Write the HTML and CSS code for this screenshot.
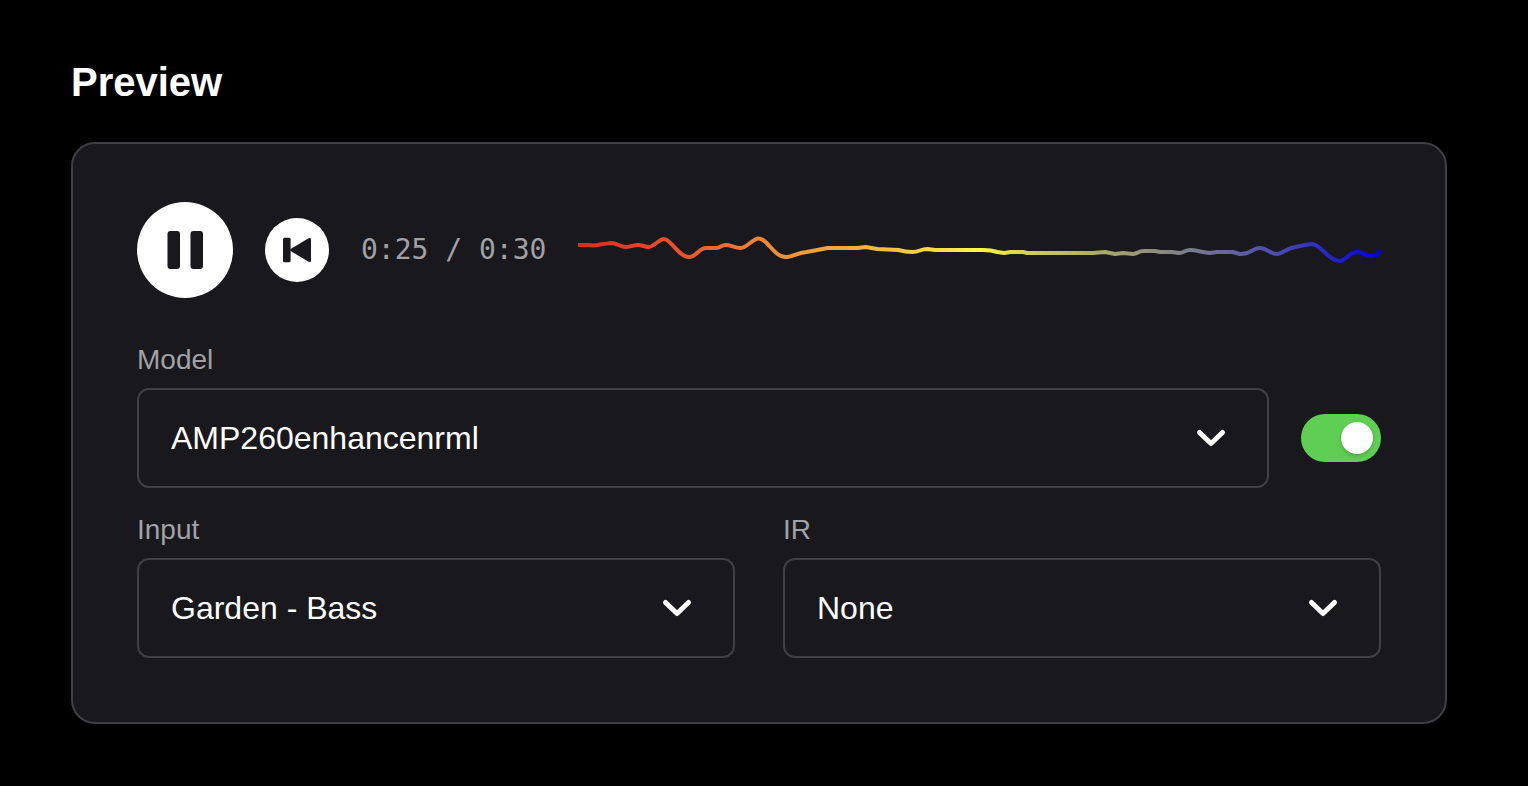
FILE: index.html
```html
<!DOCTYPE html>
<html lang="en">
<head>
  <meta charset="UTF-8" />
  <meta name="viewport" content="width=device-width, initial-scale=1.0">
  <title>Preview</title>
  <link rel="stylesheet" href="styles.css">
</head>
<body>

  <h1>Preview</h1>

  <main class="player">
    <div class="controls">
      <button class="round-button play" type="button" aria-label="Pause">
        <svg viewBox="0 0 96 96" aria-hidden="true">
          <rect x="30.5" y="29" width="12.5" height="38" rx="3" />
          <rect x="53.5" y="29" width="12.5" height="38" rx="3" />
        </svg>
      </button>
      <button class="round-button restart" type="button" aria-label="Back to start">
        <svg viewBox="0 0 64 64" aria-hidden="true">
          <rect x="18" y="19.7" width="7.6" height="24.6" rx="1.5" />
          <path d="M25.600 31 43.600 20.300Q46 19 46 21.800V42.200Q46 45 43.600 43.700L25.600 33Q24.600 32 25.600 31Z" />
        </svg>
      </button>
      <span class="time">0:25 / 0:30</span>
      <svg class="waveform" viewBox="0 0 804 96" preserveAspectRatio="none" aria-hidden="true">
        <defs>
          <linearGradient id="wave" gradientUnits="userSpaceOnUse" x1="0" y1="0" x2="804" y2="0">
            <stop offset="0" stop-color="#e02a20" />
            <stop offset="0.12" stop-color="#e8502a" />
            <stop offset="0.25" stop-color="#ee9038" />
            <stop offset="0.4" stop-color="#f2c444" />
            <stop offset="0.5" stop-color="#fcf844" />
            <stop offset="0.56" stop-color="#d4d04c" />
            <stop offset="0.75" stop-color="#80808a" />
            <stop offset="0.88" stop-color="#4646b0" />
            <stop offset="1" stop-color="#0000e6" />
          </linearGradient>
        </defs>
        <path d="M0 43H10Q16 44 22 42.500Q29 41.500 33 41C39 41 42 45 48 45S55 43 60 43S66 45 71 45C75 45 82 37 86 37C93 37 101 55 111 55C119 55 121 46 128 46H138C143 46 143 43 148 43S157 46 163 46C169 46 175 36.500 181 36.500C190 36.500 196 55 208 55C214 55 219 51 229 50Q240 48 250 46H280L288 45L300 47L321 48Q328 50 335 50C342 50 343 47 350 47L358 48H406Q414 48 420 50L427 51L433 50H446L450 51H516L528 50L538 52L546 51L556 52C561 52 561 49 567 49H578L583 50H595L602 51C607 51 608 48 613 48S625 50 633 51L640 50H656L663 52C673 53 676 46 683 46S694 52 700 52C706 52 710 46 719 45Q727 43 735 42C744 42 752 59 763 59C769 59 773 50 780 50S788 54 795 54Q803 54 803 48" />
      </svg>
    </div>

    <div class="model-row">
      <div class="field">
        <label for="model">Model</label>
        <div class="select-wrap">
          <select id="model">
            <option>AMP260enhancenrml</option>
          </select>
          <svg class="chevron" viewBox="0 0 32 32" aria-hidden="true"><path d="M4.500 10.500 16 21.500 27.500 10.500" /></svg>
        </div>
      </div>
      <input class="toggle" type="checkbox" role="switch" aria-label="Enable model" checked>
    </div>

    <div class="options-row">
      <div class="field">
        <label for="input">Input</label>
        <div class="select-wrap">
          <select id="input">
            <option>Garden - Bass</option>
          </select>
          <svg class="chevron" viewBox="0 0 32 32" aria-hidden="true"><path d="M4.500 10.500 16 21.500 27.500 10.500" /></svg>
        </div>
      </div>
      <div class="field">
        <label for="ir">IR</label>
        <div class="select-wrap">
          <select id="ir">
            <option>None</option>
          </select>
          <svg class="chevron" viewBox="0 0 32 32" aria-hidden="true"><path d="M4.500 10.500 16 21.500 27.500 10.500" /></svg>
        </div>
      </div>
    </div>
  </main>

</body>
</html>
```
FILE: styles.css
```css
* {
  box-sizing: border-box;
}

body {
  margin: 0;
  padding: 54px 81px 62px 71px;
  background: #000;
  color: #fff;
  font-family: "Liberation Sans", Arial, sans-serif;
}

h1 {
  margin: 0 0 32px;
  font-size: 40px;
  line-height: 56px;
}

.player {
  padding: 58px 64px 64px;
  background: #19181c;
  border: 2px solid #404044;
  border-radius: 24px;
}

.controls {
  display: flex;
  align-items: center;
  gap: 32px;
  margin-bottom: 42px;
}

.round-button {
  flex: none;
  padding: 0;
  border: none;
  border-radius: 50%;
  background: #fff;
  cursor: pointer;
}

.round-button svg {
  display: block;
  width: 100%;
  fill: #19181c;
}

.play {
  width: 96px;
  height: 96px;
}

.restart {
  width: 64px;
  height: 64px;
}

.time {
  color: #a1a1a8;
  font-family: "DejaVu Sans Mono", monospace;
  font-size: 28px;
  line-height: 40px;
  white-space: nowrap;
}

.waveform {
  flex: 1;
  min-width: 0;
  height: 96px;
}

.waveform path {
  fill: none;
  stroke: url(#wave);
  stroke-width: 4;
  stroke-linejoin: round;
}

.model-row {
  display: flex;
  align-items: flex-end;
  gap: 32px;
  margin-bottom: 22px;
}

.model-row .field {
  flex: 1;
}

.options-row {
  display: grid;
  grid-template-columns: 1fr 1fr;
  gap: 48px;
}

label {
  display: block;
  margin-bottom: 8px;
  color: #a1a1a8;
  font-size: 28px;
  line-height: 40px;
}

.select-wrap {
  position: relative;
}

select {
  display: block;
  width: 100%;
  height: 100px;
  padding: 0 96px 0 32px;
  appearance: none;
  background: #19181c;
  border: 2px solid #404044;
  border-radius: 12px;
  color: #fff;
  font-family: inherit;
  font-size: 32px;
  cursor: pointer;
}

.chevron {
  position: absolute;
  top: 34px;
  right: 42px;
  width: 32px;
  height: 32px;
  fill: none;
  stroke: #fff;
  stroke-width: 5;
  stroke-linecap: round;
  stroke-linejoin: round;
  pointer-events: none;
}

.toggle {
  flex: none;
  display: flex;
  justify-content: flex-end;
  width: 80px;
  height: 48px;
  margin: 0 0 26px;
  padding: 8px;
  appearance: none;
  background: #5fcf53;
  border-radius: 24px;
  cursor: pointer;
}

.toggle::before {
  content: "";
  width: 32px;
  height: 32px;
  border-radius: 50%;
  background: #fff;
  box-shadow: 0 2px 4px rgba(0, 0, 0, 0.2);
}

.toggle:not(:checked) {
  justify-content: flex-start;
  background: #404044;
}
```
